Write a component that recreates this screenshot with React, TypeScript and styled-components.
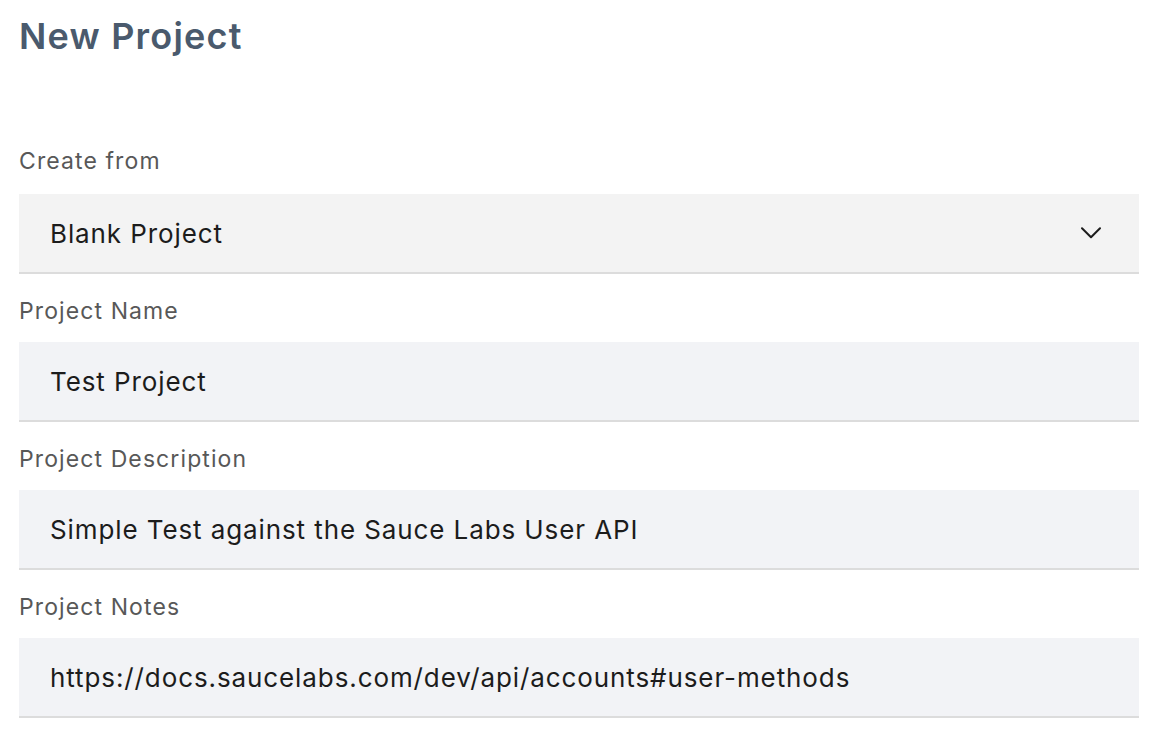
import React from "react";
import styled, { createGlobalStyle } from "styled-components";

const GlobalStyle = createGlobalStyle`
  html, body {
    margin: 0;
    padding: 0;
    background: #ffffff;
  }
  body {
    font-family: Inter, "Noto Sans", "Liberation Sans", sans-serif;
    -webkit-font-smoothing: antialiased;
  }
`;

const Page = styled.main`
  box-sizing: border-box;
  width: 1158px;
  padding: 14px 19px 0 19px;
`;

const Title = styled.h1`
  margin: 0 0 89px 0;
  font-size: 36px;
  line-height: 44px;
  font-weight: 600;
  color: #4a5a6d;
  letter-spacing: 1.2px;
`;

const Form = styled.form`
  display: flex;
  flex-direction: column;
  gap: 23px;
`;

const Group = styled.div`
  display: flex;
  flex-direction: column;
`;

const Label = styled.label<{ $gap: number }>`
  display: block;
  font-size: 23px;
  line-height: 28px;
  font-weight: 400;
  color: #585858;
  letter-spacing: 1.1px;
  margin-bottom: ${(p) => p.$gap}px;
`;

const Control = styled.div<{ $bg: string }>`
  box-sizing: border-box;
  height: 80px;
  display: flex;
  align-items: center;
  justify-content: space-between;
  padding: 0 38px 0 31px;
  background: ${(p) => p.$bg};
  border-bottom: 2px solid #dcdcdc;
  font-size: 26px;
  color: #1c1c1c;
  letter-spacing: 0.9px;
`;

const Chevron = () => (
  <svg width="20" height="12" viewBox="0 0 20 12" fill="none" aria-hidden="true">
    <path d="M1 1.2 L10 10.2 L19 1.2" stroke="#1c1c1c" strokeWidth="2" strokeLinecap="round" strokeLinejoin="round" />
  </svg>
);

const fields = [
  { label: "Project Name", value: "Test Project" },
  { label: "Project Description", value: "Simple Test against the Sauce Labs User API" },
  { label: "Project Notes", value: "https://docs.saucelabs.com/dev/api/accounts#user-methods" },
];

export default function App() {
  return (
    <>
      <GlobalStyle />
      <Page>
        <Title>New Project</Title>
        <Form>
          <Group>
            <Label $gap={19}>Create from</Label>
            <Control $bg="#f3f3f3">
              <span>Blank Project</span>
              <Chevron />
            </Control>
          </Group>
          {fields.map((f) => (
            <Group key={f.label}>
              <Label $gap={17}>{f.label}</Label>
              <Control $bg="#f2f3f6">
                <span>{f.value}</span>
              </Control>
            </Group>
          ))}
        </Form>
      </Page>
    </>
  );
}
